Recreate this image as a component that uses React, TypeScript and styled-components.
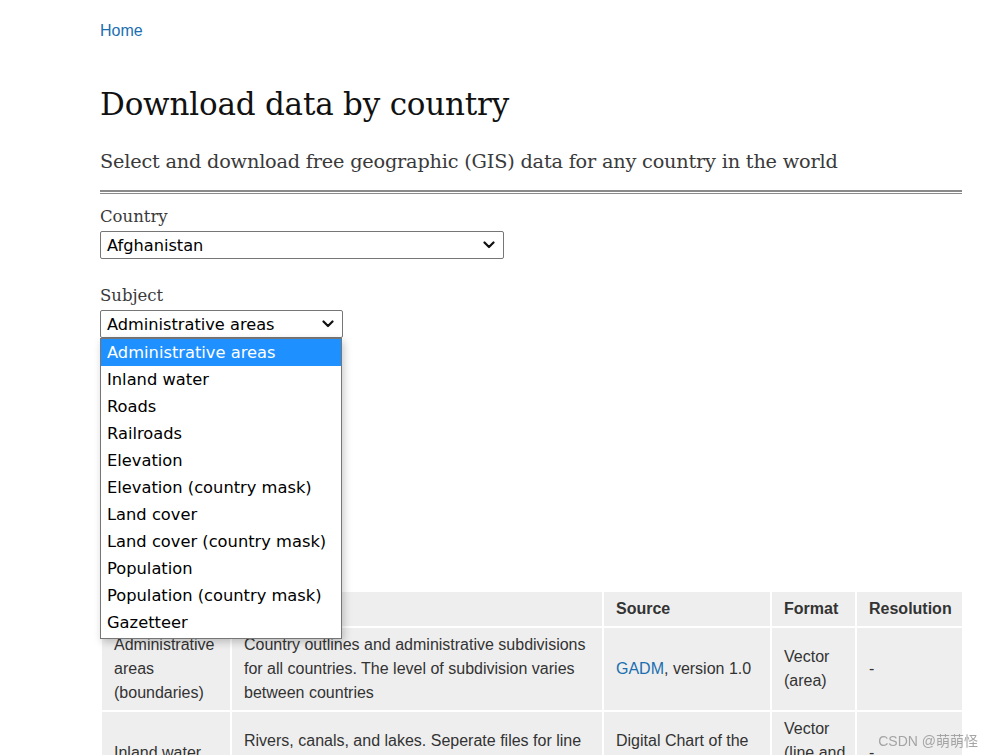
import React, { FC } from 'react';
import styled, { createGlobalStyle } from 'styled-components';

const GlobalStyle = createGlobalStyle`
  html, body {
    margin: 0;
    padding: 0;
    background: #ffffff;
  }
  body {
    font-family: "Liberation Sans", Arial, sans-serif;
    color: #333333;
  }
`;

const Page = styled.div`
  position: relative;
  width: 862px;
  margin-left: 100px;
  padding-top: 21px;
`;

const Breadcrumb = styled.a`
  display: block;
  font-family: "Liberation Sans", Arial, sans-serif;
  font-size: 16px;
  line-height: 20px;
  color: #1a6fb1;
  text-decoration: none;
`;

const Title = styled.h1`
  margin: 43px 0 0;
  font-family: "DejaVu Serif", Georgia, serif;
  font-weight: normal;
  font-size: 31px;
  line-height: 40px;
  color: #111111;
  letter-spacing: -0.2px;
`;

const Subtitle = styled.p`
  margin: 24px 0 0;
  font-family: "DejaVu Serif", Georgia, serif;
  font-size: 19.3px;
  line-height: 28px;
  color: #3a3a3a;
  letter-spacing: -0.2px;
`;

const Rule = styled.hr`
  margin: 14px 0 0;
  border: 0;
  border-top: 2px solid #8a8a8a;
  border-bottom: 1px solid #8a8a8a;
  height: 1px;
  background: #ffffff;
`;

const Field = styled.div<{ $top: number }>`
  margin-top: ${(p) => p.$top}px;
`;

const Label = styled.div`
  font-family: "DejaVu Serif", Georgia, serif;
  font-size: 16.5px;
  line-height: 22px;
  color: #3a3a3a;
`;

const SelectBox = styled.div<{ $width: number }>`
  box-sizing: border-box;
  width: ${(p) => p.$width}px;
  height: 28px;
  margin-top: 3px;
  display: flex;
  align-items: center;
  justify-content: space-between;
  padding: 0 8px 0 6px;
  border: 1px solid #767676;
  border-radius: 2px;
  background: #ffffff;
  font-family: "DejaVu Sans", Verdana, sans-serif;
  font-size: 16.2px;
  color: #000000;
`;

const Chevron: FC = () => (
  <svg width="12" height="8" viewBox="0 0 12 8">
    <path d="M1.5 1.5 L6 6 L10.5 1.5" fill="none" stroke="#111" strokeWidth="2.2" strokeLinecap="round" strokeLinejoin="round" />
  </svg>
);

const Dropdown = styled.ul`
  position: absolute;
  left: 0;
  top: 338px;
  width: 242px;
  box-sizing: border-box;
  margin: 0;
  padding: 0 0 2px;
  list-style: none;
  background: #ffffff;
  border: 1px solid #767676;
  box-shadow: 2px 3px 8px rgba(0, 0, 0, 0.22);
  z-index: 5;
`;

const Option = styled.li<{ $active?: boolean }>`
  height: 27px;
  line-height: 27px;
  padding-left: 6px;
  font-family: "DejaVu Sans", Verdana, sans-serif;
  font-size: 16.3px;
  color: ${(p) => (p.$active ? '#ffffff' : '#000000')};
  background: ${(p) => (p.$active ? '#1e90ff' : 'transparent')};
  white-space: nowrap;
`;

const Button = styled.button`
  margin-top: 44px;
  height: 24px;
  padding: 0 10px;
  border: 1px solid #999;
  background: #e9e9e9;
  font-family: "Liberation Sans", Arial, sans-serif;
  font-size: 14px;
`;

const Table = styled.table`
  margin-top: 184px;
  width: 862px;
  border-collapse: collapse;
  table-layout: fixed;
  font-family: "Liberation Sans", Arial, sans-serif;
  font-size: 16px;
  line-height: 24px;
  color: #333333;
`;

const Th = styled.th`
  background: #eeeeee;
  border: 2px solid #ffffff;
  padding: 5px 6px 5px 12px;
  text-align: left;
  font-weight: bold;
  vertical-align: middle;
`;

const Td = styled.td`
  background: #eeeeee;
  border: 2px solid #ffffff;
  padding: 5px 6px 5px 12px;
  vertical-align: middle;
`;

const Link = styled.a`
  color: #1a6fb1;
  text-decoration: none;
`;

const Watermark = styled.div`
  position: fixed;
  right: 16px;
  top: 730px;
  font-family: "Liberation Sans", "Noto Sans CJK SC", sans-serif;
  font-size: 14px;
  color: rgba(150, 150, 150, 0.85);
  z-index: 10;
`;

const subjects = [
  'Administrative areas',
  'Inland water',
  'Roads',
  'Railroads',
  'Elevation',
  'Elevation (country mask)',
  'Land cover',
  'Land cover (country mask)',
  'Population',
  'Population (country mask)',
  'Gazetteer',
];

const App: FC = () => (
  <>
    <GlobalStyle />
    <Page>
      <Breadcrumb href="#">Home</Breadcrumb>
      <Title>Download data by country</Title>
      <Subtitle>Select and download free geographic (GIS) data for any country in the world</Subtitle>
      <Rule />

      <Field $top={12}>
        <Label>Country</Label>
        <SelectBox $width={404}>
          <span>Afghanistan</span>
          <Chevron />
        </SelectBox>
      </Field>

      <Field $top={26}>
        <Label>Subject</Label>
        <SelectBox $width={243}>
          <span>Administrative areas</span>
          <Chevron />
        </SelectBox>
      </Field>

      <Dropdown>
        {subjects.map((s, i) => (
          <Option key={s} $active={i === 0}>{s}</Option>
        ))}
      </Dropdown>

      <Button>OK</Button>

      <Table>
        <colgroup>
          <col style={{ width: 130 }} />
          <col style={{ width: 372 }} />
          <col style={{ width: 168 }} />
          <col style={{ width: 85 }} />
          <col style={{ width: 107 }} />
        </colgroup>
        <thead>
          <tr>
            <Th>Subject</Th>
            <Th>Description</Th>
            <Th>Source</Th>
            <Th>Format</Th>
            <Th>Resolution</Th>
          </tr>
        </thead>
        <tbody>
          <tr>
            <Td>Administrative areas (boundaries)</Td>
            <Td>Country outlines and administrative subdivisions for all countries. The level of subdivision varies between countries</Td>
            <Td><Link href="#">GADM</Link>, version 1.0</Td>
            <Td>Vector (area)</Td>
            <Td>-</Td>
          </tr>
          <tr>
            <Td>Inland water</Td>
            <Td>Rivers, canals, and lakes. Seperate files for line and area features.</Td>
            <Td>Digital Chart of the World</Td>
            <Td>Vector (line and area)</Td>
            <Td>-</Td>
          </tr>
        </tbody>
      </Table>
    </Page>
    <Watermark>CSDN @萌萌怪</Watermark>
  </>
);

export default App;
